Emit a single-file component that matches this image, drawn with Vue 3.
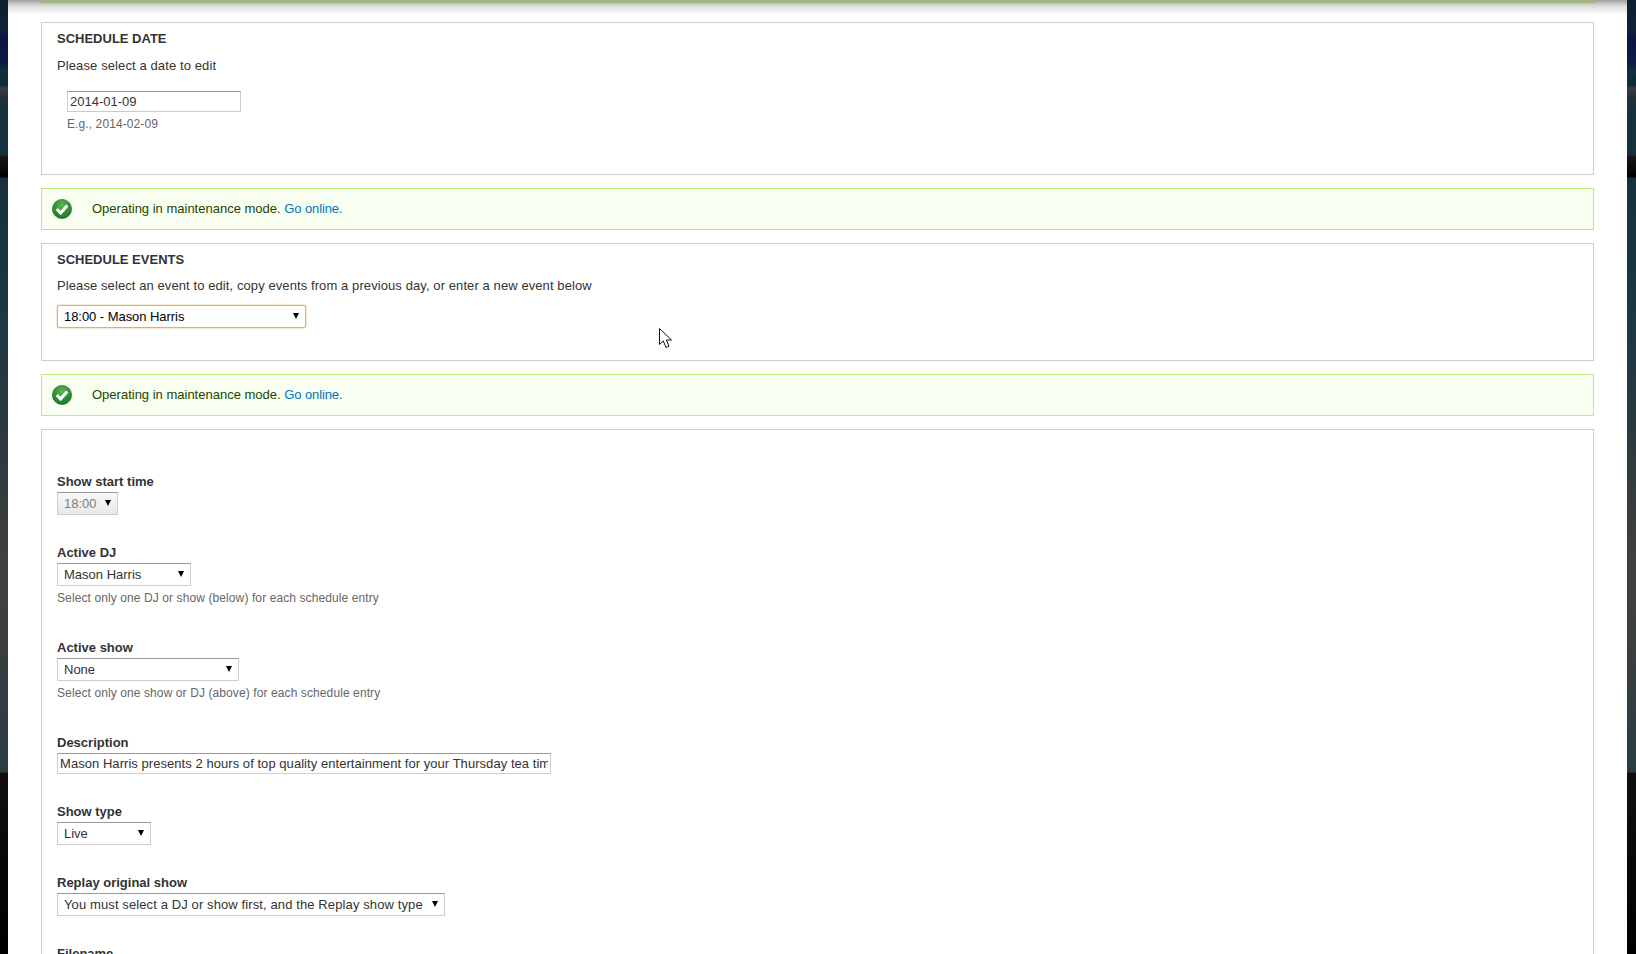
<script setup>
const message = 'Operating in maintenance mode.'
const description = 'Mason Harris presents 2 hours of top quality entertainment for your Thursday tea time'
</script>

<template>
  <div class="page">
    <main class="sheet">
      <div class="top-status"></div>

      <section class="panel panel-date">
        <h2>SCHEDULE DATE</h2>
        <p class="intro intro-date">Please select a date to edit</p>
        <div class="date-field">
          <input class="text date-input" type="text" value="2014-01-09" />
          <div class="hint">E.g., 2014-02-09</div>
        </div>
      </section>

      <div class="status">
        <svg class="check" viewBox="0 0 20 20" aria-hidden="true">
          <defs>
            <radialGradient id="okA" cx=".5" cy=".3" r=".75">
              <stop offset="0" stop-color="#62b455" />
              <stop offset=".6" stop-color="#2f8c35" />
              <stop offset="1" stop-color="#12701f" />
            </radialGradient>
          </defs>
          <circle cx="10" cy="10" r="9.6" fill="url(#okA)" stroke="#2a6e30" stroke-width=".7" />
          <path d="M4.8 10 8.6 14 15.2 6.6" fill="none" stroke="#fff" stroke-width="3" />
        </svg>
        <span class="status-text">{{ message }} <a href="#">Go online.</a></span>
      </div>

      <section class="panel panel-events">
        <h2>SCHEDULE EVENTS</h2>
        <p class="intro intro-events">Please select an event to edit, copy events from a previous day, or enter a new event below</p>
        <div class="select focus w-events">18:00 - Mason Harris</div>
      </section>

      <div class="status">
        <svg class="check" viewBox="0 0 20 20" aria-hidden="true">
          <circle cx="10" cy="10" r="9.6" fill="url(#okA)" stroke="#2a6e30" stroke-width=".7" />
          <path d="M4.8 10 8.6 14 15.2 6.6" fill="none" stroke="#fff" stroke-width="3" />
        </svg>
        <span class="status-text">{{ message }} <a href="#">Go online.</a></span>
      </div>

      <section class="panel panel-form">
        <div class="field">
          <label>Show start time</label>
          <div class="select disabled w-start">18:00</div>
        </div>
        <div class="field with-hint">
          <label>Active DJ</label>
          <div class="select w-dj">Mason Harris</div>
          <div class="hint">Select only one DJ or show (below) for each schedule entry</div>
        </div>
        <div class="field with-hint">
          <label>Active show</label>
          <div class="select w-show">None</div>
          <div class="hint">Select only one show or DJ (above) for each schedule entry</div>
        </div>
        <div class="field">
          <label>Description</label>
          <input class="text desc-input" type="text" :value="description" />
        </div>
        <div class="field">
          <label>Show type</label>
          <div class="select w-type">Live</div>
        </div>
        <div class="field">
          <label>Replay original show</label>
          <div class="select w-replay">You must select a DJ or show first, and the Replay show type</div>
        </div>
        <div class="field">
          <label>Filename</label>
        </div>
      </section>
    </main>

    <svg class="cursor" width="14" height="21" viewBox="0 0 14 21" aria-hidden="true">
      <path d="M.5.5V16.5L4.3 13 7 19.5 10 18.2 7.4 12H12.5Z" fill="#fff" stroke="#111" stroke-width="1" />
    </svg>
  </div>
</template>

<style>
html, body { margin: 0; padding: 0; background: #000; }
</style>

<style scoped>
.page {
  position: relative;
  height: 954px;
  overflow: hidden;
  padding: 0 9px 0 8px;
  box-sizing: border-box;
  background:
    linear-gradient(to bottom,
      #0e2030 0, #0f2236 30px, #0c1445 38px, #0e1a45 62px, #12303c 72px, #0e2a38 85px,
      #3c3e44 88px, #252f38 97px, #16303e 110px, #16303e 155px, #1c1616 156px, #000 177px,
      #16303e 178px, #1c3844 320px, #26383f 400px, #403f3e 560px, #403f3e 600px,
      #2a3c44 772px, #110f0f 773px, #000 954px);
  font-family: "Liberation Sans", Arial, sans-serif;
  font-size: 13px;
  color: #333;
}
.sheet {
  height: 954px;
  background: #fff linear-gradient(to bottom, #a0a0a0 0, #dcdcdc 6px, #fff 15px) no-repeat top / 100% 15px;
  padding: 0 33px;
  box-sizing: border-box;
  overflow: hidden;
}
.top-status {
  height: 2px;
  background: #a9ad98;
  border-bottom: 1px solid #98bb62;
  margin-bottom: 19px;
}
.panel {
  border: 1px solid #ccc;
  padding: 0 15px;
  margin-bottom: 13px;
}
.panel-date { height: 153px; box-sizing: border-box; }
.panel-events { height: 118px; box-sizing: border-box; }
.panel-form { padding-top: 44px; min-height: 600px; }
h2 {
  margin: 0;
  padding-top: 8px;
  font-size: 13px;
  line-height: 16px;
  font-weight: 700;
  color: #333;
}
.intro { margin: 11px 0 0; line-height: 16px; }
.intro-date { letter-spacing: .11px; }
.intro-events { margin-top: 10px; letter-spacing: .09px; }
.date-field { margin: 17px 0 0 10px; }
.text {
  display: block;
  box-sizing: border-box;
  height: 21px;
  padding: 0 2px;
  border: 1px solid #ccc;
  border-top-color: #999;
  font: 13px "Liberation Sans", Arial, sans-serif;
  color: #333;
  border-radius: 0;
  outline: none;
}
.date-input { width: 174px; }
.desc-input { width: 494px; letter-spacing: .05px; }
.hint { font-size: 12px; line-height: 14px; color: #666; margin-top: 5px; letter-spacing: .1px; }
.select {
  position: relative;
  box-sizing: border-box;
  height: 23px;
  line-height: 21px;
  padding: 0 6px;
  border: 1px solid #ccc;
  border-top-color: #999;
  background: #fff;
  color: #333;
  white-space: nowrap;
  overflow: hidden;
}
.select::after {
  content: "";
  position: absolute;
  right: 6px;
  top: 7px;
  border-left: 3.5px solid transparent;
  border-right: 3.5px solid transparent;
  border-top: 6px solid #000;
}
.select.focus {
  border: 1px solid #e0b25e;
  border-radius: 2px;
  box-shadow: 0 0 2px #e0b25e;
  color: #000;
  letter-spacing: -.05px;
}
.select.disabled {
  background: linear-gradient(#f8f8f8, #e8e8e8);
  color: #808080;
}
.w-events { width: 249px; margin-top: 11px; }
.w-start { width: 61px; }
.w-dj { width: 134px; }
.w-show { width: 182px; }
.w-type { width: 94px; }
.w-replay { width: 388px; letter-spacing: .11px; }
label {
  display: block;
  font-weight: 700;
  line-height: 16px;
  color: #333;
  margin-bottom: 2px;
}
.field { margin-bottom: 30px; }
.field.with-hint { margin-bottom: 35px; }
.status {
  display: flex;
  align-items: center;
  box-sizing: border-box;
  height: 42px;
  margin-bottom: 13px;
  padding-left: 10px;
  border: 1px solid #bee77c;
  background: #f8fff0;
  color: #234600;
}
.status-text { margin-bottom: 2px; }
.check { width: 20px; height: 20px; margin-right: 20px; flex: none; }
a { color: #0074bd; text-decoration: none; letter-spacing: -.1px; }
.cursor { position: absolute; left: 659px; top: 328px; }
</style>
